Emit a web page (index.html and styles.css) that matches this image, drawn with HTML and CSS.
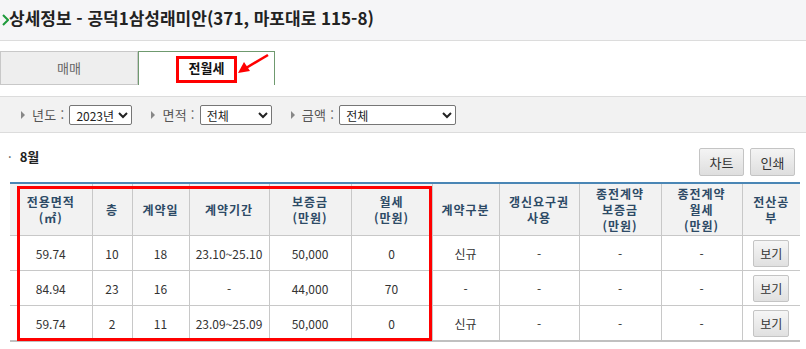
FILE: index.html
```html
<!DOCTYPE html>
<html lang="ko">
<head>
    <meta charset="UTF-8">
    <title>상세정보</title>
    <link rel="stylesheet" href="styles.css">
</head>
<body>
    <div class="title-bar">
        <svg class="chevron" width="7" height="12" viewBox="0 0 7 12">
            <polyline points="1,1 6,6 1,11" fill="none" stroke="#1e9a3c" stroke-width="2"/>
        </svg>상세정보 - 공덕1삼성래미안(371, 마포대로 115-8)
    </div>

    <div class="tabs">
        <div class="tab">매매</div>
        <div class="tab active"><span class="tab-label">전월세</span></div>
        <span class="mark mark-tab"></span>
        <svg class="arrow" width="34" height="22" viewBox="0 0 34 22">
            <line x1="32" y1="2" x2="10" y2="15" stroke="#ff0000" stroke-width="2.6"/>
            <polygon points="2,20 8,9 14,18" fill="#ff0000"/>
        </svg>
    </div>

    <div class="filters">
        <span class="filter-item">
            <span class="tri"></span>
            <label>년도 :</label>
            <select class="sel sel-year"><option>2023년</option></select>
        </span>
        <span class="filter-item">
            <span class="tri"></span>
            <label>면적 :</label>
            <select class="sel sel-area"><option>전체</option></select>
        </span>
        <span class="filter-item">
            <span class="tri"></span>
            <label>금액 :</label>
            <select class="sel sel-price"><option>전체</option></select>
        </span>
    </div>

    <div class="toolbar">
        <div class="month"><span class="dot">·</span>8월</div>
        <div class="buttons">
            <button class="btn">차트</button>
            <button class="btn">인쇄</button>
        </div>
    </div>

    <div class="table-wrap">
        <table class="deals">
            <colgroup>
                <col style="width:82px">
                <col style="width:40px">
                <col style="width:57px">
                <col style="width:80px">
                <col style="width:82px">
                <col style="width:81px">
                <col style="width:67px">
                <col style="width:80px">
                <col style="width:82px">
                <col style="width:81px">
                <col style="width:58px">
            </colgroup>
            <thead>
                <tr>
                    <th>전용면적<br>(㎡)</th>
                    <th>층</th>
                    <th>계약일</th>
                    <th>계약기간</th>
                    <th>보증금<br>(만원)</th>
                    <th>월세<br>(만원)</th>
                    <th>계약구분</th>
                    <th>갱신요구권<br>사용</th>
                    <th>종전계약<br>보증금<br>(만원)</th>
                    <th>종전계약<br>월세<br>(만원)</th>
                    <th>전산공<br>부</th>
                </tr>
            </thead>
            <tbody>
                <tr>
                    <td>59.74</td><td>10</td><td>18</td><td>23.10~25.10</td><td>50,000</td><td>0</td>
                    <td>신규</td><td>-</td><td>-</td><td>-</td><td><button class="view">보기</button></td>
                </tr>
                <tr>
                    <td>84.94</td><td>23</td><td>16</td><td>-</td><td>44,000</td><td>70</td>
                    <td>-</td><td>-</td><td>-</td><td>-</td><td><button class="view">보기</button></td>
                </tr>
                <tr>
                    <td>59.74</td><td>2</td><td>11</td><td>23.09~25.09</td><td>50,000</td><td>0</td>
                    <td>신규</td><td>-</td><td>-</td><td>-</td><td><button class="view">보기</button></td>
                </tr>
            </tbody>
        </table>
        <span class="mark mark-table"></span>
    </div>
</body>
</html>
```

FILE: styles.css
```css
body {
    margin: 0;
    font-family: "Noto Sans CJK KR", "Noto Sans", sans-serif;
    font-size: 12px;
    color: #333;
    background: #fff;
    width: 806px;
    overflow: hidden;
}

.title-bar {
    height: 40px;
    line-height: 36px;
    background: #f5f5f7;
    border-bottom: 1px solid #dcdcdc;
    font-size: 17px;
    font-weight: bold;
    color: #222;
    padding-left: 2px;
    white-space: nowrap;
}

.chevron {
    margin-right: 0;
    vertical-align: -1px;
}

.tabs {
    position: relative;
    display: flex;
    margin-top: 10px;
    height: 34px;
}

.tab {
    width: 138px;
    box-sizing: border-box;
    height: 34px;
    line-height: 32px;
    text-align: center;
    font-size: 13px;
    color: #666;
    background: #eee;
    border: 1px solid #c8c8c8;
}

.tab.active {
    width: 137px;
    background: #fff;
    color: #111;
    font-weight: bold;
    border: 1px solid #6f9a6f;
    border-bottom: none;
}

.mark {
    position: absolute;
    border: 3px solid #ff0000;
    box-sizing: border-box;
    pointer-events: none;
}

.mark-tab {
    left: 176px;
    top: 5px;
    width: 61px;
    height: 27px;
}

.arrow {
    position: absolute;
    left: 236px;
    top: 2px;
}

.filters {
    margin-top: 11px;
    height: 35px;
    background: #f2f2f2;
    border-top: 1px solid #dcdcdc;
    border-bottom: 1px solid #dcdcdc;
    display: flex;
    align-items: center;
    padding-left: 21px;
    gap: 19px;
}

.filter-item {
    display: flex;
    align-items: center;
}

.tri {
    width: 0;
    height: 0;
    border-top: 4px solid transparent;
    border-bottom: 4px solid transparent;
    border-left: 4px solid #888;
    margin-right: 7px;
}

.filter-item label {
    font-size: 13px;
    color: #555;
    margin-right: 5px;
    letter-spacing: 0.3px;
}

.sel {
    height: 20px;
    font-family: "Noto Sans CJK KR", sans-serif;
    font-size: 12px;
    color: #222;
    border: 1px solid #767676;
    border-radius: 2px;
    background: #fff;
    padding: 0 0 0 2px;
}

.sel-year { width: 63px; }
.sel-area { width: 72px; }
.sel-price { width: 117px; }

.toolbar {
    display: flex;
    justify-content: space-between;
    align-items: flex-start;
    margin-top: 15px;
    height: 28px;
    padding: 0 11px 0 8px;
}

.month {
    font-size: 13px;
    font-weight: bold;
    color: #222;
    line-height: 18px;
}

.dot {
    margin-right: 8px;
    font-weight: normal;
    color: #555;
}

.buttons {
    display: flex;
    gap: 6px;
}

.btn {
    width: 45px;
    height: 28px;
    font-family: "Noto Sans CJK KR", sans-serif;
    font-size: 13px;
    color: #333;
    background: linear-gradient(#f4f4f4, #dedede);
    border: 1px solid #c4c4c4;
    border-radius: 2px;
    padding: 0;
}

.table-wrap {
    position: relative;
    margin: 6px 0 0 10px;
    width: 790px;
}

.deals {
    border-collapse: collapse;
    table-layout: fixed;
    width: 790px;
    border-top: 2px solid #4a86b5;
    border-bottom: 2px solid #c0c0c0;
}

.deals th,
.deals td {
    border: 1px solid #c8c8c8;
    text-align: center;
    padding: 0;
}

.deals th {
    height: 51px;
    background: #f2f2f2;
    color: #2d4a66;
    font-weight: bold;
    font-size: 12px;
    line-height: 16px;
    letter-spacing: 1px;
}

.deals td {
    height: 34px;
    font-size: 12px;
    color: #333;
    background: #fff;
}

.deals tr > :first-child { border-left: none; }
.deals tr > :last-child { border-right: none; }

.view {
    width: 36px;
    height: 27px;
    font-family: "Noto Sans CJK KR", sans-serif;
    font-size: 12px;
    color: #333;
    background: linear-gradient(#f6f6f6, #e0e0e0);
    border: 1px solid #c4c4c4;
    border-radius: 2px;
    padding: 0;
}

.mark-table {
    left: 7px;
    top: 4px;
    width: 415px;
    height: 155px;
}
```
